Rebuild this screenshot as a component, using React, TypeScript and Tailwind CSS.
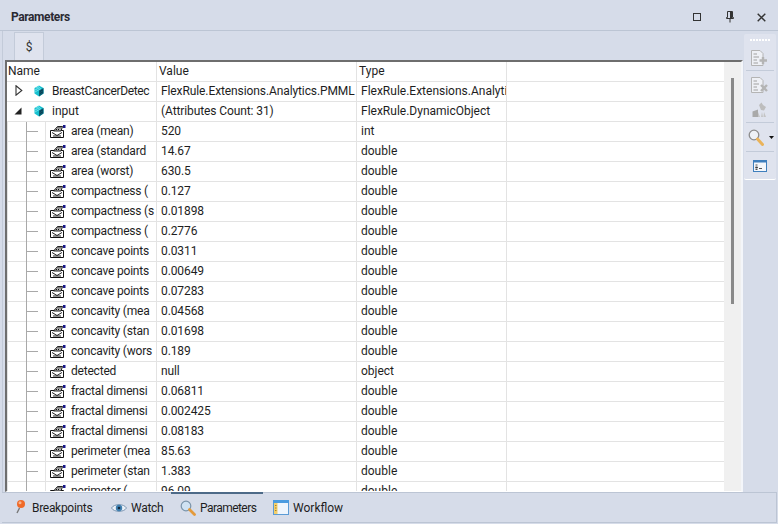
import React from "react";

const rows: [string, string, string][] = [
  ["area (mean)", "520", "int"],
  ["area (standard", "14.67", "double"],
  ["area (worst)", "630.5", "double"],
  ["compactness (", "0.127", "double"],
  ["compactness (s", "0.01898", "double"],
  ["compactness (", "0.2776", "double"],
  ["concave points", "0.0311", "double"],
  ["concave points", "0.00649", "double"],
  ["concave points", "0.07283", "double"],
  ["concavity (mea", "0.04568", "double"],
  ["concavity (stan", "0.01698", "double"],
  ["concavity (wors", "0.189", "double"],
  ["detected", "null", "object"],
  ["fractal dimensi", "0.06811", "double"],
  ["fractal dimensi", "0.002425", "double"],
  ["fractal dimensi", "0.08183", "double"],
  ["perimeter (mea", "85.63", "double"],
  ["perimeter (stan", "1.383", "double"],
  ["perimeter (", "96.09", "double"],
];

const Cube = () => (
  <svg width="10" height="12" viewBox="0 0 10 12" className="shrink-0">
    <path d="M5 0.5 9.5 3 9.5 8.5 5 11.5 0.5 8.5 0.5 3Z" fill="#18c0cf" />
    <path d="M5 5.5 9.5 3 9.5 8.5 5 11.5Z" fill="#0b5f73" />
    <path d="M2 3 5 1.5M1 5 6 2.5M1 7 7 3.5" stroke="#7fe9f0" strokeWidth="0.8" />
    <path d="M6 6.5 9 4.8M6 8.5 9 6.8" stroke="#0a2f45" strokeWidth="0.8" />
  </svg>
);

const FieldIcon = () => (
  <svg width="16" height="14" viewBox="0 0 16 14" className="shrink-0">
    <path d="M0.5 6.5H13.5V13.5H0.5Z" fill="#fff" stroke="#111" />
    <path d="M2 8.5 7 11.5 12 8.5M3 12H11" fill="none" stroke="#222" />
    <path d="M3.5 7 7.5 2.5H12.5L11 7Z" fill="#b5b5b5" stroke="#111" strokeWidth="0.9" />
    <path d="M6 5.5H10M7.5 3.8H11.5" stroke="#111" strokeDasharray="1 1" />
    <rect x="13" y="1" width="2.5" height="3" fill="#1a1a8c" />
  </svg>
);

const ArrowOpen = () => (
  <svg width="8" height="11" viewBox="0 0 8 11" className="shrink-0">
    <path d="M1 0.8 6.8 5.5 1 10.2Z" fill="#fff" stroke="#333" strokeWidth="1.1" />
  </svg>
);

const ArrowDown = () => (
  <svg width="8" height="8" viewBox="0 0 8 8" className="shrink-0">
    <path d="M7.5 0.5V7.5H0.5Z" fill="#222" />
  </svg>
);

const Cells = ({ value, type }: { value: string; type: string }) => (
  <>
    <div className="w-[200px] shrink-0 h-full pl-[4px] pb-[2px] border-l border-[#e3e3e3] whitespace-nowrap overflow-hidden flex items-center tracking-[-0.1px]">{value}</div>
    <div className="w-[151px] shrink-0 h-full pl-[4px] pb-[2px] border-x border-[#e3e3e3] whitespace-nowrap overflow-hidden flex items-center">{type}</div>
  </>
);

const ToolDoc = ({ kind }: { kind: "plus" | "x" }) => (
  <svg width="20" height="18" viewBox="0 0 20 18">
    <path d="M1.5 1.5H10L13 4.5V16.5H1.5Z" fill="#eef0f5" stroke="#b4b4b4" />
    <path d="M3.5 5H7M3.5 8H9M3.5 11H7M3.5 14H8" stroke="#a0a0a0" />
    {kind === "plus" ? (
      <path d="M13 8V15M9.5 11.5H17" stroke="#b4b4b4" strokeWidth="2.4" />
    ) : (
      <path d="M11 9 17 15M17 9 11 15" stroke="#b4b4b4" strokeWidth="2.4" />
    )}
  </svg>
);

const Eraser = () => (
  <svg width="16" height="16" viewBox="0 0 16 16">
    <path d="M0.5 15V9.5L6 7.5V15Z" fill="#a9a9a9" />
    <path d="M6 10 8 15H6ZM10 10 9 15H11ZM12 10 14 15H11.5Z" fill="#c4c4c4" />
    <path d="M7 3 9.5 0.5 11 3 14 5 12 8.5 9 8Z" fill="#bdbdbd" />
  </svg>
);

const BigMagnifier = () => (
  <svg width="16" height="17" viewBox="0 0 16 17">
    <circle cx="6" cy="6" r="4.8" fill="#eef1f6" stroke="#8c8c8c" strokeWidth="1.3" />
    <path d="M9.5 10 14.5 15.5" stroke="#eab35a" strokeWidth="3" strokeLinecap="round" />
  </svg>
);

const Console = () => (
  <svg width="14" height="12" viewBox="0 0 14 12">
    <rect x="0.5" y="0.5" width="13" height="11" fill="#f4f7fb" stroke="#3f7fbd" />
    <rect x="0" y="0" width="14" height="2.5" fill="#3f7fbd" />
    <path d="M2.5 5H4.5M2.5 7H4.5V8H2.5M2.5 9.5H4.5M6 8.5H9" stroke="#555" />
  </svg>
);

const Pin = () => (
  <svg width="8" height="12" viewBox="0 0 8 12">
    <path d="M1.5 0.5H6.5V6.5H7.5V7.5H0.5V6.5H1.5ZM4 7.5V11.5" fill="none" stroke="#333" />
    <rect x="4" y="1" width="2" height="6" fill="#333" />
  </svg>
);

const PinBall = () => (
  <svg width="11" height="17" viewBox="0 0 11 17">
    <path d="M4.5 9 2 14" stroke="#777" strokeWidth="1.4" />
    <circle cx="6" cy="5" r="4" fill="#f06a28" />
    <circle cx="5" cy="3.8" r="1.5" fill="#f9b38a" />
  </svg>
);

const Eye = () => (
  <svg width="16" height="12" viewBox="0 0 16 12">
    <path d="M0.5 6C3 1.5 13 1.5 15.5 6 13 10.5 3 10.5 0.5 6Z" fill="#e9eff6" stroke="#7d97b3" />
    <circle cx="8" cy="6" r="3.2" fill="#3f7fb0" />
    <circle cx="8" cy="6" r="1.3" fill="#12293d" />
  </svg>
);

const TabMagnifier = () => (
  <svg width="16" height="16" viewBox="0 0 16 16">
    <circle cx="6" cy="6" r="4.8" fill="#cfe2f3" stroke="#7a94aa" strokeWidth="1.2" />
    <path d="M9.5 9.5 14.5 14.5" stroke="#e39a3b" strokeWidth="2.8" strokeLinecap="round" />
  </svg>
);

const Workflow = () => (
  <svg width="16" height="15" viewBox="0 0 16 15">
    <rect x="0.5" y="0.5" width="15" height="14" fill="#eef5fd" stroke="#5b9bd5" />
    <rect x="0" y="0" width="16" height="3" fill="#4a9be0" />
    <rect x="1" y="3" width="3.5" height="11" fill="#f3cf6a" />
    <path d="M2 5.5H3.5M2 8H3.5M2 10.5H3.5" stroke="#a9822a" />
  </svg>
);

const BottomTab = ({ icon, label, w, active, track }: { icon: React.ReactNode; label: string; w: string; active?: boolean; track: string }) => (
  <div className={`relative flex items-center h-full ${w}`}>
    {active && <div className="absolute left-[-9px] w-[92px] top-[-1px] h-[2px] bg-[#4d6a88]" />}
    <div className="flex items-center justify-center w-[16px] mr-[4px] shrink-0">{icon}</div>
    <span className={track}>{label}</span>
  </div>
);

export default function App() {
  return (
    <div
      className="w-[778px] h-[524px] overflow-hidden flex flex-col bg-[#d6dce9] text-[12px] leading-none text-[#1e1e1e]"
      style={{ fontFamily: 'Roboto, "Open Sans", sans-serif' }}
    >
      {/* Title */}
      <div className="h-[31px] shrink-0 flex items-center border-b border-[#bcc5d4] pl-[11px] pt-[4px]">
        <span className="font-bold text-[12px] tracking-[-0.4px] text-[#2a2a33]">Parameters</span>
        <div className="ml-auto flex items-center">
          <div className="w-[8px] h-[8px] border border-[#333] mr-[25px]" />
          <div className="mr-[23px] flex"><Pin /></div>
          <svg width="9" height="9" viewBox="0 0 9 9" className="mr-[12px]">
            <path d="M0.7 0.7 8.3 8.3M8.3 0.7 0.7 8.3" stroke="#333" strokeWidth="1.4" />
          </svg>
        </div>
      </div>

      {/* Body */}
      <div className="flex-1 flex min-h-0 pl-[2px]">
        <div className="w-[741px] shrink-0 border-l border-[#c3cbd9] flex flex-col">
          {/* Tab strip */}
          <div className="h-[29px] shrink-0 pl-[11px] flex items-end">
            <div className="w-[30px] h-[28px] bg-[#dfe3ee] border border-b-0 border-[#c3cbd9] flex items-center justify-center text-[#333]">
              $
            </div>
          </div>
          {/* Table frame */}
          <div className="h-[432px] shrink-0 ml-[2px] border-t-2 border-l-2 border-[#6e6e6e] border-r-2 border-r-[#f4f6fa] border-b border-b-[#fff] bg-white flex overflow-hidden">
            <div className="w-[717px] shrink-0 overflow-hidden">
              {/* Header */}
              <div className="h-[20px] flex items-center border-b border-[#e3e3e3]">
                <div className="w-[149px] shrink-0 pl-[1px] pb-[2px]">Name</div>
                <div className="w-[200px] shrink-0 h-full pl-[2px] pb-[2px] border-l border-[#e3e3e3] flex items-center">Value</div>
                <div className="w-[151px] shrink-0 h-full pl-[2px] pb-[2px] border-x border-[#e3e3e3] flex items-center">Type</div>
              </div>
              {/* Parent rows */}
              <div className="h-[20px] flex items-center border-b border-[#e3e3e3] pl-[1px]">
                <div className="w-[148px] shrink-0 flex items-center pl-[7px] pb-[2px] overflow-hidden whitespace-nowrap tracking-[-0.33px]">
                  <ArrowOpen />
                  <div className="ml-[11px] mr-[8px] flex"><Cube /></div>
                  BreastCancerDetec
                </div>
                <Cells value="FlexRule.Extensions.Analytics.PMML" type="FlexRule.Extensions.Analyti" />
              </div>
              <div className="h-[20px] flex items-center border-b border-[#e3e3e3] pl-[1px]">
                <div className="w-[148px] shrink-0 flex items-center pl-[6px] pb-[2px] overflow-hidden whitespace-nowrap">
                  <ArrowDown />
                  <div className="ml-[12px] mr-[8px] flex"><Cube /></div>
                  input
                </div>
                <Cells value="(Attributes Count: 31)" type="FlexRule.DynamicObject" />
              </div>
              {/* Children */}
              {rows.map((r, i) => (
                <div key={i} className="h-[20px] flex items-center border-b border-l border-[#e3e3e3]">
                  <div className="w-[38px] shrink-0 h-[20px] flex items-center pl-[18px] border-r border-[#e3e3e3]">
                    <div className="h-full border-l border-[#a9a9a9] w-0" />
                    <div className="h-px w-[11px] bg-[#a9a9a9]" />
                  </div>
                  <div className="w-[110px] shrink-0 flex items-center pl-[4px] pb-[2px] overflow-hidden whitespace-nowrap">
                    <FieldIcon />
                    <span className="ml-[5px] tracking-[-0.2px]">{r[0]}</span>
                  </div>
                  <Cells value={r[1]} type={r[2]} />
                </div>
              ))}
            </div>
            {/* Scrollbar */}
            <div className="w-[17px] shrink-0 bg-[#f0f0f0] pt-[16px] pl-[7px]">
              <div className="w-[3px] h-[226px] bg-[#8a8a8a]" />
            </div>
          </div>
        </div>

        {/* Right toolbar */}
        <div className="flex-1 pt-[3px] pl-[1px]">
          <div className="w-[32px] h-[146px] bg-[#dfe3ee] border-b border-white rounded-[2px] flex flex-col items-center">
            <div className="h-[11px] shrink-0 w-full flex items-center justify-center gap-[1px]">
              {[0, 1, 2, 3, 4, 5, 6].map((d) => (
                <div key={d} className="w-[2px] h-[2px] bg-white" />
              ))}
            </div>
            <div className="h-[25px] shrink-0 flex items-center"><ToolDoc kind="plus" /></div>
            <div className="w-[28px] h-px shrink-0 bg-[#c3cbd9]" />
            <div className="h-[27px] shrink-0 flex items-center"><ToolDoc kind="x" /></div>
            <div className="h-[24px] shrink-0 flex items-center"><Eraser /></div>
            <div className="w-[28px] h-px shrink-0 bg-[#c3cbd9]" />
            <div className="h-[28px] shrink-0 flex items-center gap-[5px] pl-[2px]">
              <BigMagnifier />
              <svg width="5" height="3" viewBox="0 0 5 3"><path d="M0 0H5L2.5 3Z" fill="#111" /></svg>
            </div>
            <div className="w-[28px] h-px shrink-0 bg-[#c3cbd9]" />
            <div className="h-[27px] shrink-0 flex items-center"><Console /></div>
          </div>
        </div>
      </div>

      {/* Bottom tabs */}
      <div className="h-[31px] shrink-0 ml-[2px] mr-[1px] mb-px border-y border-r border-[#bcc5d4] flex items-center pl-[10px]">
        <BottomTab icon={<PinBall />} label="Breakpoints" w="w-[99px]" track="tracking-[-0.3px]" />
        <BottomTab icon={<Eye />} label="Watch" w="w-[69px]" track="tracking-[-0.3px]" />
        <BottomTab icon={<TabMagnifier />} label="Parameters" w="w-[93px]" track="tracking-[-0.55px]" active />
        <BottomTab icon={<Workflow />} label="Workflow" w="w-[90px]" track="tracking-normal" />
      </div>
    </div>
  );
}
